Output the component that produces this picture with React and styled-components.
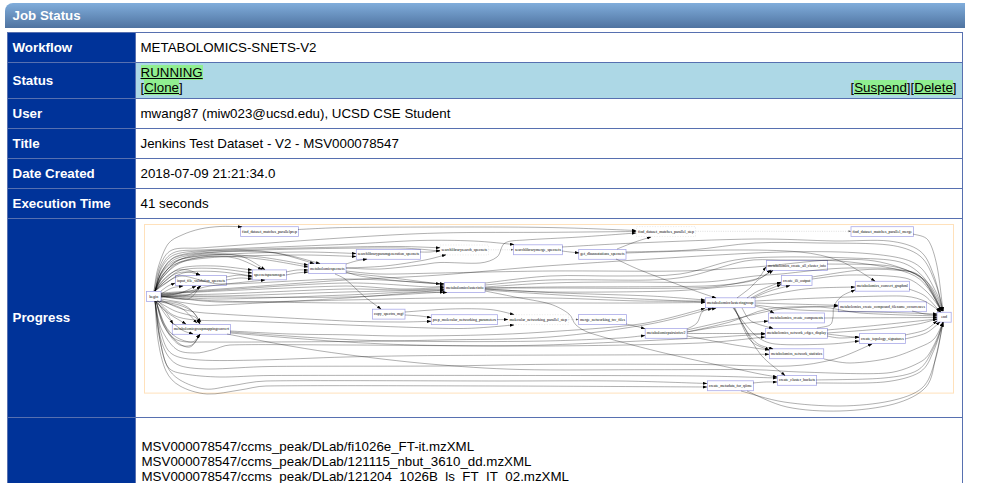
import React from "react";
import styled, { createGlobalStyle } from "styled-components";

const GlobalStyle = createGlobalStyle`
  body {
    margin: 0;
    background: #fff;
    color: #000;
    font: 13.333px/15px "Liberation Sans", Arial, sans-serif;
  }
  #root { height: 483px; overflow: hidden; }
`;

const Page = styled.main`
  width: 960px;
  height: 480px;
  padding: 3px 0 0 5px;
`;

const TitleBar = styled.h1`
  height: 25px;
  margin: 0;
  padding-left: 7.5px;
  border-top-left-radius: 8px;
  background: linear-gradient(#80addb, #4f73a0);
  color: #fff;
  font-size: 13.333px;
  line-height: 25px;
`;

const Table = styled.div`
  width: 956px;
  box-sizing: border-box;
  margin: 4px 0 0 2px;
  border: 1px solid #5770b0;
  border-bottom: 0;
`;

const Row = styled.div`
  display: grid;
  grid-template-columns: 127px 1fr;
  height: ${(p) => p.$height}px;
  & + & { border-top: 1px solid #5770b0; }
`;

const Label = styled.div`
  display: flex;
  align-items: center;
  padding: 0 0 ${(p) => p.$lift || 0}px 4.5px;
  background: #003399;
  color: #fff;
  font-weight: bold;
`;

const Value = styled.div`
  display: flex;
  align-items: center;
  border-left: 1px solid #5770b0;
  padding-left: 4.5px;
`;

const StatusValue = styled(Value)`
  align-items: flex-end;
  justify-content: space-between;
  padding: 0 5.5px 3px 4.5px;
  background: #add8e6;
`;

const GraphValue = styled(Value)`
  align-items: flex-start;
  padding: 0;
`;

const Files = styled(Value)`
  flex-direction: column;
  align-items: flex-start;
  padding: 21px 0 0 5.5px;
`;

const Link = styled.a`
  background: #90ee90;
  text-decoration: underline;
`;

const Graph = styled.svg`
  display: block;
  text {
    font-family: "Liberation Serif", serif;
    font-size: 4.1px;
    text-anchor: middle;
    fill: #000;
  }
`;

const nodes = [
  ["begin", 146.5, 291.5, 161],
  ["find_dataset_matches_parallelprep", 240.6, 226.7, 298.4],
  ["input_file_validation_specnets", 175.5, 275.5, 226.5],
  ["specnetsparamsgen", 252.5, 269.9, 286.5],
  ["metabolomicspecnets", 308.6, 263.6, 346],
  ["metabolomicgroupmappingconvert", 172.3, 324.4, 230.5],
  ["searchlibraryparamgeneration_specnets", 356.3, 249.4, 420.6],
  ["searchlibrarysearch_specnets", 440, 245, 488.5, true],
  ["searchlibrarymerge_specnets", 513.5, 244.8, 562.5],
  ["metabolomicclusterinfo", 444.5, 282.6, 485],
  ["copy_spectra_mgf", 372.4, 309.2, 405],
  ["prep_molecular_networking_parameters", 431.3, 314.7, 497.5],
  ["molecular_networking_parallel_step", 508, 314.7, 568.5, true],
  ["merge_networking_tsv_files", 578.5, 314.6, 626.5],
  ["metabolomicpairsinfov2", 645.2, 328.4, 687],
  ["find_dataset_matches_parallel_step", 636.5, 226.6, 695.5, true],
  ["get_dbannotations_specnets", 578.7, 249.4, 626],
  ["metabolomicclusteringroup", 705.4, 297.8, 755],
  ["create_metadata_for_qiime", 707.4, 380.8, 753.5],
  ["find_dataset_matches_parallel_merge", 851, 226.7, 913.5],
  ["metabolomics_create_all_cluster_info", 766.5, 260.5, 827.5],
  ["create_ili_output", 781.5, 275.5, 812],
  ["metabolomics_convert_graphml", 855.3, 281.3, 909.4],
  ["metabolomics_create_compound_filename_occurrences", 838.4, 301.8, 926.4],
  ["metabolomics_create_components", 768.5, 313, 824.5],
  ["metabolomics_network_edges_display", 765.6, 328.4, 827.6],
  ["metabolomics_network_statistics", 769.6, 348.8, 823.7],
  ["create_topology_signatures", 859.4, 333.6, 905.4],
  ["create_cluster_buckets", 777.4, 375.4, 816.6],
  ["end", 937, 312.3, 951.2],
];

const edges = [
  // begin, upper fan
  "154,291 158,268 168,244 182,235 200,229 220,226.5 242,226.7",
  "154,291 160,266 172,250 200,248 346,237.7 440,233 550,232.3 636,231.5",
  "155,291 161,267 174,252.5 200,250 346,244.3 420,240.5 473,241 514,244.5",
  "155,291 161,269 175,254.5 210,250.5 346,247 400,246.5 440,247.8",
  "155,291 162,271 176,257 215,252 300,249 400,248 440,251",
  "155,291 162,273 178,260 220,254.5 300,252 356,253.5",
  "155,291 163,274 179,262.5 220,257 300,255 356,256.5",
  "155,291 162,271 177,256 220,250.5 270,252 314,263.5",
  "155,291 162,272 178,258 220,252 275,253 320,263.5",
  "155,291 163,275 179,260 215,254.5 260,257 308,265",
  "155,291 163,277 180,262 215,256 260,259 308,267",
  "155,291 163,275 179,260 205,254 240,256 265,269.5",
  "155,291 163,277 180,263 205,257 235,258 262,269.5",
  "155,291 164,280 181,268 215,266 252,270",
  "155,291 164,282 182,270 215,268.5 252,273",
  "155,291 165,284 183,273 215,271.5 252,276",
  "155,291 163,280 175,271 188,270 200,275",
  "155,291 163,283 175,274 188,272 200,275",
  "161,291 168,286 175,283", "161,294 172,288 183,286",
  "161,295 180,293 196,286", "161,296 188,299 200,286",
  "161,297 188,295 201,286", "161,297 190,291 210,286 265,280",
  "226,277 240,275 252,277", "226,280 240,278 252,279",
  "286,272 297,270 308,270", "286,275 297,273 308,272",
  // long central runs
  "161,293 220,289 346,280 440,275 550,265.7 755,253 840,252 895,257 920,267 936,292 943,311",
  "161,294 220,290 346,283 430,287 444,286",
  "161,294 220,291 346,286 400,289 444,287.5",
  "161,295 220,294 346,289 400,290 444,289",
  "161,295 220,296 346,292 444,290",
  "161,296 220,297 346,297 444,292",
  "161,296 220,299 346,295 410,292 447,292.5",
  "161,297 220,301 346,303 550,303 640,303 705,302.5",
  "161,296 220,302 346,300 440,298 550,298 640,301 705,301",
  "155,291 164,284 182,276 220,284 346,279 444,284",
  "346,271 380,274 440,273 550,271 680,271 755,267 830,260 880,262 925,280 943,311",
  "346,268 380,269 420,265 440,262.5 480,263 497,257 505,243 525,240 580,237 636,233",
  "346,273 385,277 440,284", "346,272 360,276 400,281 444,284",
  "335,274 345,279 365,297 381,309",
  "346,264 356,261 367,259", "346,268 385,266 425,260 446,254.7",
  "420,252 430,252 440,250.5", "298,229.5 346,227.5 500,227 570,228 636,230.5",
  "485,283 550,276 620,276 680,274 735,260 780,257 850,258 900,262 925,279 942,311",
  "485,285 550,280 650,280 690,276 745,261 780,260 850,262 915,276 942,311",
  "485,287 550,283 620,282 705,282 755,276 781,274 850,268 916,274 942,311",
  "485,288 550,287 705,286 755,280 766,267",
  "485,288 550,288 705,287.5 760,278 771,270",
  "485,289 550,292 670,291 735,286 781,283",
  "485,289 560,293 650,296 705,300", "485,290 560,295 640,299 705,302",
  "485,291 515,297 550,304 569,314 576,325 590,333 660,352 755,373 777,377",
  // upper right
  "562,247 636,243 755,239 835,241 889,241 920,251 934,276 943,311",
  "562,251 570,252 579,253", "617,249 635,242 651,237",
  "626,252 690,250 755,243 820,243 889,245 920,256 935,282 943,311",
  "626,253 730,250 800,252 840,261 875,281",
  "616,259 640,270 690,289 716,298",
  "913,234 928,240 937,266 943,311",
  "405,312 450,309 490,309.5 514,314.5", "405,315 420,316 431,317.5",
  "497,319.6 502,319.6 508,319.6",
  "737,298 750,288 758,280 773,270.5", "747,298 758,291 781,282",
  "751,298 765,291 781,284.5", "753,298 770,291 790,285.5",
  "755,298 805,289 855,287", "755,301 820,298 900,296 922,300 941,312",
  "755,303 790,304 838,305.3", "755,306 766,309 774,313",
  "742,308 751,321 773,328.5", "734,308 748,333 758,344 773,349",
  "735,308 750,340 769,350",
  "734,308 744,327 761,355 785,375.5",
  "733,308 755,335 775,344 830,344 859,341",
  // lower fan
  "155,301 160,306 166,312 173,324", "156,301 168,313 186,324",
  "157,301 175,311 195,317 200,324", "157,301 179,305 193,312 200,323",
  "157,301 181,308 197,323", "160,301 178,303 190,309 201,322",
  "161,299 200,305 220,305 346,298 444,290",
  "161,300 182,309 205,313 346,321 400,322 431,321.3",
  "158,301 173,315 195,320 240,321 346,325 460,328.5 514,325",
  "157,301 168,318 182,330 193,334", "156,301 165,325 176,337 192,342 200,334.5",
  "156,301 164,324 176,341 190,347 200,334.5", "156,301 164,326 178,344 192,345 200,334.5",
  "156,301 163,324 177,340 205,342 346,341.5 440,340 550,337 650,324 712,308.5",
  "155,301 161,328 176,349 195,353 212,350 230,345 346,345 545,346 700,343 765,337",
  "155,301 161,333 172,354 200,360 260,360 346,357 440,355.5 650,354.8 769,354.3",
  "155,301 160,336 168,356 181,366 210,369 270,366.5 440,366 550,364.3 700,364.5 790,366 835,359 872,344",
  "155,301 160,340 168,367 185,374 220,377 270,375.5 550,375.5 700,376 777,378",
  "155,301 159,335 167,366 180,380 205,389 230,386 266,381 500,381 620,381 707,383.5",
  "155,301 158,340 166,371 180,386 207,394 240,390 266,386 500,386 707,387",
  "230,331 290,334 346,334.8 400,336 480,335 545,332 640,324 705,308.4",
  "230,332 346,339.5 440,341.5 545,341 620,338 645,335.5",
  "230,333 346,342 440,345.5 545,345 700,338 765,334",
  "227,334 290,346 346,354.5 430,364 520,369.5 650,369.7 755,369.7 800,372 887,373 922,361 934,345 943,322.5",
  "626,324 635,326 645,328.7",
  "687,329 697,323 703,311 716,308.3", "687,330 735,319 781,309 838,306",
  "687,332 730,325 768,321", "687,333.5 735,333.5 765,333.5",
  "687,336 735,345 769,350",
  "755,305 800,310 875,312 937,314",
  "687,332 730,322 768,309 820,307 860,313 937,316",
  // outputs toward end
  "812,277 860,270 894,270 920,276 942,311", "812,279 850,275 905,278 926,291 942,311",
  "827,264 890,266 922,279 941,311", "909,289 925,296 940,311.5",
  "912,311 925,314 937,315",
  "824,318 937,317.5", "827,330 870,326 937,319", "827,333 880,329 918,324 937,319",
  "827,334 844,336 859,337.5", "827,336 840,338 859,337",
  "817,328 830,325 833,317 834,306 842,296 855,290",
  "905,335 925,330 937,321", "905,339 926,333 940,322",
  "824,359 850,363 890,358 920,347 934,339 943,322.5",
  "816,380 884,378 918,370 934,347 943,322.5",
  "816,383 884,382 920,372 934,350 943,322.5",
  "753,383 765,382 777,382",
  "741,391 784,402 840,406 890,401 922,388 935,361 943,322.5",
  "747,391 787,407 840,411 894,404 926,387 936,356 943,322.5",
];

function smoothPath(text) {
  const p = text.split(" ").map((pair) => pair.split(",").map(Number));
  let d = `M${p[0]}`;
  for (let i = 0; i < p.length - 1; i += 1) {
    const a = p[Math.max(0, i - 1)];
    const b = p[i];
    const c = p[i + 1];
    const e = p[Math.min(p.length - 1, i + 2)];
    // Handles are capped to the segment length so uneven spacing stays smooth.
    const length = Math.hypot(c[0] - b[0], c[1] - b[1]);
    const s1 = Math.min(1 / 6, (length * 0.36) / Math.hypot(c[0] - a[0], c[1] - a[1]));
    const s2 = Math.min(1 / 6, (length * 0.36) / Math.hypot(e[0] - b[0], e[1] - b[1]));
    d += `C${b[0] + (c[0] - a[0]) * s1},${b[1] + (c[1] - a[1]) * s1} ${c[0] - (e[0] - b[0]) * s2},${c[1] - (e[1] - b[1]) * s2} ${c}`;
  }
  return d;
}

function WorkflowGraph() {
  return (
    <Graph width="826" height="198" viewBox="136 219 826 198">
      <defs>
        <marker id="arrow" markerUnits="userSpaceOnUse" markerWidth="5" markerHeight="4" refX="4" refY="1.5" orient="auto">
          <path d="M0 0L4.3 1.5L0 3Z" fill="#000" />
        </marker>
      </defs>
      <rect x="144.5" y="224.5" width="809" height="168.6" fill="none" stroke="#ffe1bb" />
      {nodes.map(([name, x, y, right, dashed]) => (
        <rect
          key={name}
          x={x}
          y={y}
          width={right - x}
          height="9.9"
          fill="#fff"
          stroke={dashed ? "#ddd" : "#aaaae8"}
          strokeWidth={dashed ? 0.5 : 0.8}
          strokeDasharray={dashed ? "1.3 1.3" : undefined}
        />
      ))}
      <g fill="none" stroke="#000" strokeOpacity="0.75" strokeWidth="0.42">
        {edges.map((edge) => (
          <path key={edge} d={smoothPath(edge)} markerEnd="url(#arrow)" />
        ))}
        <g strokeDasharray="1 1.3" strokeOpacity="0.3">
          <path d="M488.5 249.8H513" />
          <path d="M568.5 319.6H578" />
          <path d="M695.5 231.3H851" />
        </g>
        <g stroke="none" fill="#000" fillOpacity="0.65">
          <path d="M511 248.8L513.5 249.8L511 250.8Z" />
          <path d="M576 318.6L578.5 319.6L576 320.6Z" />
          <path d="M848.5 230.3L851 231.3L848.5 232.3Z" />
        </g>
      </g>
      {nodes.map(([name, x, y, right]) => (
        <text
          key={name}
          x={(x + right) / 2}
          y={y + 6}
          textLength={name.length < 6 ? undefined : right - x - 3}
          lengthAdjust="spacingAndGlyphs"
        >
          {name}
        </text>
      ))}
    </Graph>
  );
}

function Field({ label, children }) {
  return (
    <Row $height={29}>
      <Label>{label}</Label>
      <Value>{children}</Value>
    </Row>
  );
}

export default function App() {
  return (
    <>
      <GlobalStyle />
      <Page>
        <TitleBar>Job Status</TitleBar>
        <Table>
          <Field label="Workflow">METABOLOMICS-SNETS-V2</Field>
          <Row $height={35}>
            <Label>Status</Label>
            <StatusValue>
              <div>
                <Link>RUNNING</Link>
                <br />[<Link>Clone</Link>]
              </div>
              <div>
                [<Link>Suspend</Link>][<Link>Delete</Link>]
              </div>
            </StatusValue>
          </Row>
          <Field label="User">mwang87 (miw023@ucsd.edu), UCSD CSE Student</Field>
          <Field label="Title">Jenkins Test Dataset - V2 - MSV000078547</Field>
          <Field label="Date Created">2018-07-09 21:21:34.0</Field>
          <Field label="Execution Time">41 seconds</Field>
          <Row $height={198}>
            <Label $lift={2}>Progress</Label>
            <GraphValue>
              <WorkflowGraph />
            </GraphValue>
          </Row>
          <Row $height={65}>
            <Label />
            <Files>
              <div>MSV000078547/ccms_peak/DLab/fi1026e_FT-it.mzXML</div>
              <div>MSV000078547/ccms_peak/DLab/121115_nbut_3610_dd.mzXML</div>
              <div>MSV000078547/ccms_peak/DLab/121204_1026B_ls_FT_IT_02.mzXML</div>
            </Files>
          </Row>
        </Table>
      </Page>
    </>
  );
}
